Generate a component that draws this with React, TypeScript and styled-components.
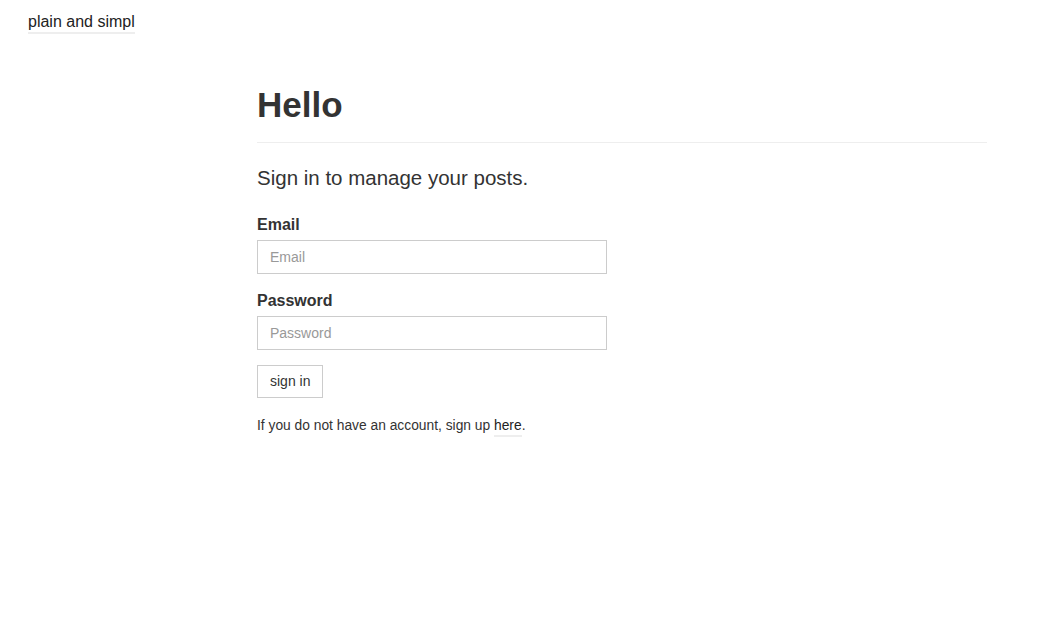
import React from "react";
import styled, { createGlobalStyle } from "styled-components";

const GlobalStyle = createGlobalStyle`
  html, body {
    margin: 0;
    padding: 0;
    background: #ffffff;
  }
  body {
    font-family: "Liberation Sans", Arial, Helvetica, sans-serif;
    font-size: 14px;
    line-height: 20px;
    color: #333333;
  }
  * { box-sizing: border-box; }
`;

const Page = styled.div`
  display: flex;
  flex-direction: row;
  align-items: flex-start;
  width: 1048px;
  min-height: 633px;
`;

const Sidebar = styled.nav`
  width: 257px;
  flex: 0 0 257px;
  padding: 12px 0 0 28px;
`;

const BrandLink = styled.a`
  display: inline-block;
  font-size: 16px;
  line-height: 20px;
  color: #222222;
  text-decoration: none;
  border-bottom: 2px solid #eeeeee;
`;

const Main = styled.main`
  width: 730px;
  flex: 0 0 730px;
  padding-top: 85px;
`;

const PageHeader = styled.header`
  padding-bottom: 17px;
  border-bottom: 1px solid #eeeeee;
`;

const Title = styled.h1`
  margin: 0;
  font-size: 35px;
  line-height: 40px;
  font-weight: 700;
  color: #333333;
`;

const Lead = styled.p`
  margin: 20px 0 0;
  font-size: 20.5px;
  line-height: 29.4px;
  font-weight: 300;
  color: #333333;
`;

const Form = styled.form`
  display: flex;
  flex-direction: column;
  align-items: flex-start;
  margin-top: 23px;
`;

const FormGroup = styled.div<{ $last?: boolean }>`
  display: flex;
  flex-direction: column;
  margin-bottom: ${(p) => (p.$last ? "15px" : "17px")};
`;

const Label = styled.label`
  font-weight: 700;
  font-size: 16px;
  line-height: 20px;
  margin-bottom: 5px;
  color: #333333;
`;

const Input = styled.input`
  width: 350px;
  height: 34px;
  padding: 6px 12px;
  border: 1px solid #cccccc;
  border-radius: 0;
  font-family: inherit;
  font-size: 14px;
  color: #555555;
  outline: none;
  &::placeholder {
    color: #999999;
  }
`;

const Button = styled.button`
  height: 33px;
  padding: 6px 12px;
  border: 1px solid #cccccc;
  border-radius: 0;
  background: #ffffff;
  font-family: inherit;
  font-size: 14px;
  line-height: 19px;
  color: #333333;
  cursor: pointer;
`;

const Note = styled.p`
  margin: 18px 0 0;
  font-size: 13.8px;
  line-height: 20px;
  color: #333333;
`;

const InlineLink = styled.a`
  color: #222222;
  text-decoration: none;
  padding-bottom: 2px;
  border-bottom: 2px solid #eeeeee;
`;

export default function App() {
  return (
    <>
      <GlobalStyle />
      <Page>
        <Sidebar>
          <BrandLink href="#">plain and simpl</BrandLink>
        </Sidebar>
        <Main>
          <PageHeader>
            <Title>Hello</Title>
          </PageHeader>
          <Lead>Sign in to manage your posts.</Lead>
          <Form onSubmit={(e) => e.preventDefault()}>
            <FormGroup>
              <Label htmlFor="email">Email</Label>
              <Input id="email" type="email" placeholder="Email" />
            </FormGroup>
            <FormGroup $last>
              <Label htmlFor="password">Password</Label>
              <Input id="password" type="password" placeholder="Password" />
            </FormGroup>
            <Button type="submit">sign in</Button>
          </Form>
          <Note>
            If you do not have an account, sign up <InlineLink href="#">here</InlineLink>.
          </Note>
        </Main>
      </Page>
    </>
  );
}
